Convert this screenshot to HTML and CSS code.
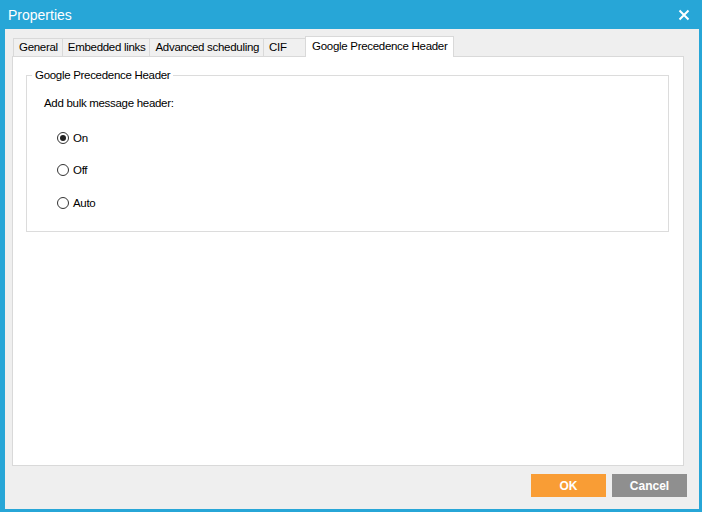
FILE: index.html
```html
<!DOCTYPE html>
<html lang="en">
<head>
  <meta charset="UTF-8" />
  <title>Properties</title>
  <link rel="stylesheet" href="styles.css">
</head>
<body>
  <div class="window">
    <div class="titlebar">
      <span class="title">Properties</span>
      <span class="close">
        <svg width="12" height="12" viewBox="0 0 12 12"><path d="M1.5 1.5 L10.5 10.5 M10.5 1.5 L1.5 10.5" stroke="#fff" stroke-width="2" fill="none"/></svg>
      </span>
    </div>

    <div class="client">
      <div class="tabs">
        <div class="tab">General</div>
        <div class="tab">Embedded links</div>
        <div class="tab">Advanced scheduling</div>
        <div class="tab">CIF</div>
        <div class="tab active">Google Precedence Header</div>
      </div>

      <div class="panel">
        <fieldset class="group">
          <legend>Google Precedence Header</legend>
          <div class="group-body">
            <p class="caption">Add bulk message header:</p>
            <label class="radio"><span class="dot checked"></span>On</label>
            <label class="radio"><span class="dot"></span>Off</label>
            <label class="radio"><span class="dot"></span>Auto</label>
          </div>
        </fieldset>
      </div>

      <div class="footer">
        <button class="btn ok">OK</button>
        <button class="btn cancel">Cancel</button>
      </div>
    </div>
  </div>
</body>
</html>
```

FILE: styles.css
```css
* { margin: 0; padding: 0; box-sizing: border-box; }
html, body { width: 702px; height: 512px; overflow: hidden; }
body { font-family: "Liberation Sans", Arial, sans-serif; font-size: 11.5px; letter-spacing: -0.3px; color: #000; }

.window {
  width: 702px; height: 512px; background: #27a6d7;
  display: flex; flex-direction: column; padding: 0 3px 3px 5px;
}
.titlebar {
  height: 29px; display: flex; align-items: center; justify-content: space-between;
  color: #fff; padding: 0 9px 0 3px;
}
.title { font-size: 14px; letter-spacing: 0; }
.close { display: flex; }

.client {
  flex: 1; background: #efefef; display: flex; flex-direction: column;
  padding: 7px 15px 12px 7px;
}

.tabs { display: flex; align-items: flex-end; height: 20px; padding-left: 1px; position: relative; z-index: 1; }
.tab {
  height: 18px; line-height: 16px; padding: 0 4px 0 5px; min-width: 42px;
  border: 1px solid #d9d9d9; border-bottom: none; border-left: none;
  background: #f0f0f0; white-space: nowrap;
}
.tab:first-child { border-left: 1px solid #d9d9d9; }
.tab.active {
  height: 21px; margin-bottom: -1px; background: #fff; padding: 1px 6px 0 6px;
  border-left: 1px solid #d9d9d9; margin-left: -1px;
}

.panel {
  flex: 1; background: #fff; border: 1px solid #d9d9d9;
  padding: 11px 14px 0 13px;
}

.group {
  border: 1px solid #dcdcdc; padding: 0; height: 164px;
}
.group legend { padding: 0 3px; margin-left: 5px; line-height: 15px; }
.group-body { padding: 13px 0 0 17px; }
.caption { line-height: 15px; margin-bottom: 19px; }

.radio { display: flex; align-items: center; height: 15px; margin-bottom: 17.5px; margin-left: 13px; }
.dot {
  width: 12px; height: 12px; border: 1px solid #333; border-radius: 50%;
  margin-right: 4px; display: flex; align-items: center; justify-content: center;
}
.dot.checked::after {
  content: ""; width: 6px; height: 6px; border-radius: 50%; background: #222;
}

.footer { display: flex; justify-content: flex-end; gap: 6px; padding-top: 8px; margin-right: -3px; }
.btn {
  width: 75px; height: 23px; border: none; color: #fff; font-weight: bold;
  font-family: "Liberation Sans", Arial, sans-serif; font-size: 12px;
}
.ok { background: #f99d35; }
.cancel { background: #8f8f8f; }
```
